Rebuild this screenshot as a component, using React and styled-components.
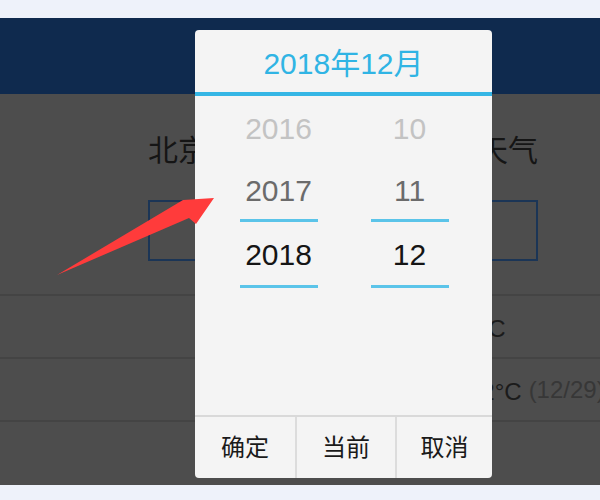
import React from 'react';
import styled, { createGlobalStyle } from 'styled-components';

const GlobalStyle = createGlobalStyle`
  html, body {
    margin: 0;
    padding: 0;
    background: #eef2fa;
  }
  body {
    font-family: 'Liberation Sans', 'Noto Sans CJK SC', sans-serif;
  }
`;

const Page = styled.div`
  position: relative;
  width: 600px;
  height: 500px;
  overflow: hidden;
  background: #eef2fa;
  padding-top: 18px;
  box-sizing: border-box;
`;

const AppFrame = styled.div`
  height: 467px;
  display: flex;
  flex-direction: column;
`;

const Header = styled.div`
  height: 76px;
  background: #0f2a4e;
`;

const Content = styled.div`
  flex: 1;
  background: #4d4d4d;
  display: flex;
  flex-direction: column;
`;

const Intro = styled.div`
  display: flex;
  flex-direction: column;
  padding: 39px 0 0 148px;
  height: 200px;
  box-sizing: border-box;
`;

const Heading = styled.h1`
  margin: 0;
  font-weight: normal;
  font-size: 30px;
  line-height: 36px;
  color: #151515;
  white-space: nowrap;
`;

const SearchBox = styled.div`
  margin-top: 31px;
  width: 390px;
  height: 61px;
  border: 2px solid #1b3556;
  box-sizing: border-box;
`;

const Row = styled.div`
  height: 63px;
  border-top: 2px solid #444444;
  box-sizing: border-box;
  display: flex;
  align-items: center;
  padding-left: ${p => p.indent}px;
  font-size: 24px;
  color: #1b1b1b;
  white-space: nowrap;
`;

const DateNote = styled.span`
  margin-left: 7px;
  color: #373737;
`;

const Picker = styled.div`
  position: absolute;
  left: 195px;
  top: 30px;
  width: 297px;
  height: 448px;
  background: #f4f4f4;
  border-radius: 4px;
  display: flex;
  flex-direction: column;
  overflow: hidden;
`;

const PickerTitle = styled.div`
  height: 62px;
  border-bottom: 4px solid #35b6e5;
  display: flex;
  align-items: center;
  justify-content: center;
  font-size: 30px;
  color: #30b4e4;
`;

const PickerBody = styled.div`
  flex: 1;
  display: grid;
  grid-template-columns: 1fr 1fr;
  padding: 2px 17px 0 18px;
`;

const Wheel = styled.div`
  display: flex;
  flex-direction: column;
`;

const WheelItem = styled.div`
  position: relative;
  height: ${p => p.size}px;
  display: flex;
  align-items: center;
  justify-content: center;
  font-size: 30px;
  color: ${p => p.tone};

  &::after {
    content: '';
    display: ${p => (p.marked ? 'block' : 'none')};
    position: absolute;
    left: 50%;
    bottom: 0;
    width: 78px;
    height: 3px;
    margin-left: -39px;
    background: #5bc4e9;
  }
`;

const PickerFooter = styled.div`
  height: 63px;
  border-top: 2px solid #d9d9d9;
  box-sizing: border-box;
  display: grid;
  grid-template-columns: 100px 100px 1fr;
`;

const FooterButton = styled.button`
  border: 0;
  border-left: ${p => (p.first ? '0' : '2px solid #dcdcdc')};
  background: transparent;
  font-family: inherit;
  font-size: 24px;
  color: #1a1a1a;
  padding: 0 0 4px;
`;

const Arrow = styled.svg`
  position: absolute;
  left: 0;
  top: 0;
  pointer-events: none;
`;

const TONES = ['#c3c3c3', '#6b6b6b', '#151515'];
const SIZES = [62, 62, 66];

const years = ['2016', '2017', '2018'];
const months = ['10', '11', '12'];

export default function App() {
  return (
    <Page>
      <GlobalStyle />
      <AppFrame>
        <Header />
        <Content>
          <Intro>
            <Heading>北京市一周的气温变化与天气</Heading>
            <SearchBox />
          </Intro>
          <Row indent={332}>白天最高：13°C</Row>
          <Row indent={340}>
            夜间最低：-12°C<DateNote>(12/29)</DateNote>
          </Row>
          <Row indent={0} />
        </Content>
      </AppFrame>

      <Picker>
        <PickerTitle>2018年12月</PickerTitle>
        <PickerBody>
          <Wheel>
            {years.map((y, i) => (
              <WheelItem key={y} tone={TONES[i]} size={SIZES[i]} marked={i > 0}>
                {y}
              </WheelItem>
            ))}
          </Wheel>
          <Wheel>
            {months.map((m, i) => (
              <WheelItem key={m} tone={TONES[i]} size={SIZES[i]} marked={i > 0}>
                {m}
              </WheelItem>
            ))}
          </Wheel>
        </PickerBody>
        <PickerFooter>
          <FooterButton first>确定</FooterButton>
          <FooterButton>当前</FooterButton>
          <FooterButton>取消</FooterButton>
        </PickerFooter>
      </Picker>

      <Arrow width="600" height="500" viewBox="0 0 600 500">
        <path d="M57 275 L183 200 L214 198 L196 224 L189 218 Z" fill="#ff3b3b" />
      </Arrow>
    </Page>
  );
}
